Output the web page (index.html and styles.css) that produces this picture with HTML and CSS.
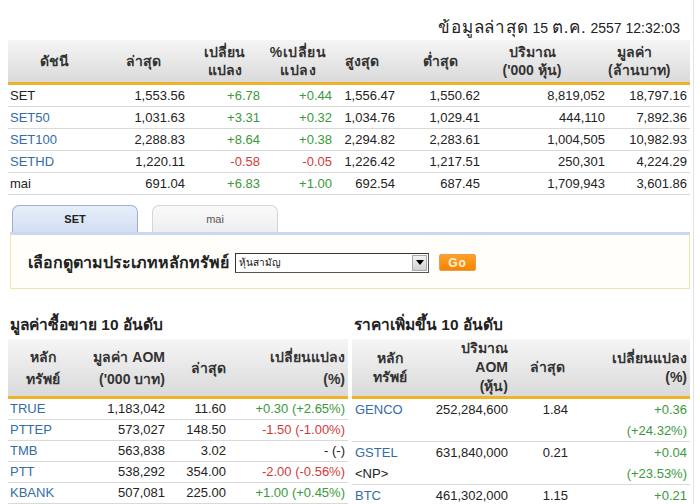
FILE: index.html
```html
<!DOCTYPE html>
<html lang="th">
<head>
<meta charset="utf-8">
<title>SET</title>
<link rel="stylesheet" href="styles.css">
</head>
<body>
<div class="page">
  <div class="stamp"><span class="th">ข้อมูลล่าสุด</span> 15 <span class="th">ต.ค.</span> 2557 12:32:03</div>

  <table class="idx">
    <colgroup>
      <col class="w92"><col class="w87"><col class="w75"><col class="w72"><col class="w64"><col class="w84"><col class="w126"><col class="w82">
    </colgroup>
    <thead>
      <tr>
        <th class="c1">ดัชนี</th>
        <th class="c2">ล่าสุด</th>
        <th class="c3">เปลี่ยน<br>แปลง</th>
        <th class="c4">%เปลี่ยน<br>แปลง</th>
        <th class="c5">สูงสุด</th>
        <th class="c6">ต่ำสุด</th>
        <th class="c7">ปริมาณ<br>('000 หุ้น)</th>
        <th class="c8">มูลค่า<br>(ล้านบาท)</th>
      </tr>
    </thead>
    <tbody>
      <tr><td class="c1">SET</td><td>1,553.56</td><td class="up">+6.78</td><td class="up">+0.44</td><td class="c5">1,556.47</td><td>1,550.62</td><td class="c7">8,819,052</td><td class="c8">18,797.16</td></tr>
      <tr><td class="c1 link">SET50</td><td>1,031.63</td><td class="up">+3.31</td><td class="up">+0.32</td><td class="c5">1,034.76</td><td>1,029.41</td><td class="c7">444,110</td><td class="c8">7,892.36</td></tr>
      <tr><td class="c1 link">SET100</td><td>2,288.83</td><td class="up">+8.64</td><td class="up">+0.38</td><td class="c5">2,294.82</td><td>2,283.61</td><td class="c7">1,004,505</td><td class="c8">10,982.93</td></tr>
      <tr><td class="c1 link">SETHD</td><td>1,220.11</td><td class="down">-0.58</td><td class="down">-0.05</td><td class="c5">1,226.42</td><td>1,217.51</td><td class="c7">250,301</td><td class="c8">4,224.29</td></tr>
      <tr><td class="c1">mai</td><td>691.04</td><td class="up">+6.83</td><td class="up">+1.00</td><td class="c5">692.54</td><td>687.45</td><td class="c7">1,709,943</td><td class="c8">3,601.86</td></tr>
    </tbody>
  </table>

  <div class="tabs">
    <div class="tab active">SET</div>
    <div class="tab">mai</div>
  </div>
  <div class="filter">
    <span class="filter-label">เลือกดูตามประเภทหลักทรัพย์</span>
    <div class="select">
      <span class="select-text">หุ้นสามัญ</span>
      <span class="select-btn"><svg width="8" height="5" viewBox="0 0 8 5"><path d="M0 0h8L4 5z" fill="#000"/></svg></span>
    </div>
    <span class="go">Go</span>
  </div>

  <div class="bottom">
    <section class="panel">
      <h2 class="title">มูลค่าซื้อขาย 10 อันดับ</h2>
      <table class="top10 left">
        <colgroup><col class="w70"><col class="w89"><col class="w61"><col class="w120"></colgroup>
        <thead>
          <tr>
            <th class="first">หลัก<br>ทรัพย์</th>
            <th>มูลค่า AOM<br>('000 บาท)</th>
            <th>ล่าสุด</th>
            <th class="last">เปลี่ยนแปลง<br>(%)</th>
          </tr>
        </thead>
        <tbody>
          <tr><td class="first link">TRUE</td><td>1,183,042</td><td>11.60</td><td class="last up">+0.30 (+2.65%)</td></tr>
          <tr><td class="first link">PTTEP</td><td>573,027</td><td>148.50</td><td class="last down">-1.50 (-1.00%)</td></tr>
          <tr><td class="first link">TMB</td><td>563,838</td><td>3.02</td><td class="last">- (-)</td></tr>
          <tr><td class="first link">PTT</td><td>538,292</td><td>354.00</td><td class="last down">-2.00 (-0.56%)</td></tr>
          <tr><td class="first link">KBANK</td><td>507,081</td><td>225.00</td><td class="last up">+1.00 (+0.45%)</td></tr>
        </tbody>
      </table>
    </section>
    <section class="panel">
      <h2 class="title">ราคาเพิ่มขึ้น 10 อันดับ</h2>
      <table class="top10 right">
        <colgroup><col class="w76"><col class="w82"><col class="w60"><col class="w120"></colgroup>
        <thead>
          <tr>
            <th class="first">หลัก<br>ทรัพย์</th>
            <th>ปริมาณ<br>AOM<br>(หุ้น)</th>
            <th class="price">ล่าสุด</th>
            <th class="last">เปลี่ยนแปลง<br>(%)</th>
          </tr>
        </thead>
        <tbody>
          <tr><td class="first link">GENCO</td><td>252,284,600</td><td>1.84</td><td class="last up">+0.36<br>(+24.32%)</td></tr>
          <tr><td class="first"><span class="link">GSTEL</span><br>&lt;NP&gt;</td><td>631,840,000</td><td>0.21</td><td class="last up">+0.04<br>(+23.53%)</td></tr>
          <tr><td class="first link">BTC</td><td>461,302,000</td><td>1.15</td><td class="last up">+0.21</td></tr>
        </tbody>
      </table>
    </section>
  </div>
</div>
</body>
</html>
```

FILE: styles.css
```css
html, body {
  margin: 0;
  padding: 0;
  background: #fff;
}
body {
  font-family: Tahoma, "Liberation Sans", "Noto Sans", sans-serif;
  font-size: 13px;
  color: #222;
  overflow: hidden;
}
.page {
  width: 694px;
  height: 504px;
  border-right: 1px solid #e2e2e2;
  padding-top: 19px;
  box-sizing: border-box;
}
.stamp {
  text-align: right;
  padding-right: 13px;
  height: 18px;
  line-height: 18px;
  margin-bottom: 3px;
  font-size: 14px;
}
.stamp .th { font-size: 17px; letter-spacing: 0.8px; }

.w60 { width: 60px; }
.w61 { width: 61px; }
.w64 { width: 64px; }
.w70 { width: 70px; }
.w72 { width: 72px; }
.w75 { width: 75px; }
.w76 { width: 76px; }
.w82 { width: 82px; }
.w84 { width: 84px; }
.w87 { width: 87px; }
.w89 { width: 89px; }
.w92 { width: 92px; }
.w120 { width: 120px; }
.w126 { width: 126px; }

/* index table */
.idx {
  margin-left: 8px;
  width: 682px;
  border-collapse: collapse;
  table-layout: fixed;
}
.idx th {
  height: 42px;
  padding: 0;
  line-height: 18px;
  font-weight: bold;
  font-size: 14px;
  color: #333;
  text-align: center;
  background: linear-gradient(#f5f5f5, #dadada);
  border-bottom: 3px solid #eeb32a;
  white-space: nowrap;
}
.idx td {
  height: 21px;
  padding: 0 2px 0 0;
  text-align: right;
  border-bottom: 1px solid #d9d9d9;
  white-space: nowrap;
}
.idx td.c1 { text-align: left; padding-left: 2px; }
.idx td.c5, .idx td.c7, .idx td.c8 { padding-right: 3px; }
.idx th.c4 { letter-spacing: 0.5px; }
.idx th.c5 { padding-right: 8px; }
.idx th.c7 { padding-right: 26px; }
.idx th.c8 { padding-right: 30px; }

.link { color: #336ca6; }
.up { color: #3a993a; }
.down { color: #d23a3a; }

/* tabs */
.tabs {
  display: flex;
  gap: 14px;
  margin: 10px 0 0 12px;
  height: 27px;
}
.tab {
  width: 124px;
  height: 26px;
  line-height: 26px;
  text-align: center;
  font-size: 11px;
  color: #555;
  background: linear-gradient(#fafafa, #eeeeee);
  border: 1px solid #d6d6d6;
  border-bottom: none;
  border-radius: 7px 7px 0 0;
}
.tab.active {
  font-weight: bold;
  color: #222;
  background: linear-gradient(#e6eefa, #d2dff2);
  border-color: #9fb2cc;
}
.filter {
  margin-left: 10px;
  width: 680px;
  height: 57px;
  box-sizing: border-box;
  border-top: 3px solid #c9d8ef;
  border-left: 1px solid #efe5ae;
  border-right: 1px solid #efe5ae;
  border-bottom: 1px solid #efe5ae;
  background: #fffefa;
  display: flex;
  align-items: center;
  padding: 2px 0 0 17px;
}
.filter-label {
  font-weight: bold;
  font-size: 16px;
  color: #222;
}
.select {
  margin-left: 6px;
  width: 194px;
  height: 20px;
  box-sizing: border-box;
  border: 1px solid #555;
  border-top-color: #333;
  border-left-color: #333;
  background: #fff;
  display: flex;
  align-items: center;
}
.select-text {
  flex: 1;
  font-size: 10px;
  padding-left: 3px;
  color: #111;
}
.select-btn {
  width: 15px;
  height: 16px;
  margin-right: 1px;
  background: linear-gradient(#f2f2f2, #d2d2d2);
  border: 1px solid #a8a8a8;
  box-sizing: border-box;
  display: flex;
  align-items: center;
  justify-content: center;
}
.go {
  margin-left: 10px;
  width: 37px;
  height: 17px;
  line-height: 17px;
  text-align: center;
  color: #fff3d8;
  font-weight: bold;
  font-size: 12px;
  background: linear-gradient(#ffa02a, #f58400);
  border: 1px solid #e8a050;
  border-radius: 2px;
  box-sizing: border-box;
  letter-spacing: 1px;
}

/* bottom */
.bottom {
  display: flex;
  gap: 4px;
  margin: 27px 0 0 8px;
}
.panel { display: flex; flex-direction: column; }
.title {
  margin: 0 0 5px 2px;
  font-size: 15.5px;
  font-weight: bold;
  line-height: 18px;
  height: 18px;
  color: #222;
  white-space: nowrap;
}
.top10 {
  border-collapse: collapse;
  table-layout: fixed;
}
.top10.left { width: 340px; }
.top10.right { width: 338px; }
.top10 th {
  height: 57px;
  padding: 0 2px 0 0;
  font-size: 14px;
  font-weight: bold;
  color: #333;
  text-align: right;
  line-height: 22px;
  background: linear-gradient(#f5f5f5, #dadada);
  border-bottom: 3px solid #eeb32a;
  vertical-align: middle;
  white-space: nowrap;
}
.top10.right th { line-height: 19px; }
.top10 td {
  height: 20px;
  padding: 0 2px 0 0;
  text-align: right;
  border-bottom: 1px solid #d9d9d9;
  white-space: nowrap;
  line-height: 20px;
  vertical-align: top;
}
.top10 th.first { text-align: center; padding: 0; }
.top10 .last { padding-right: 3px; }
.top10.left td.first { text-align: left; padding-left: 2px; }
.top10.right td.first { text-align: left; padding-left: 3px; }
.top10 th.price { padding-right: 5px; }
.top10.right td { line-height: 21px; }
```
